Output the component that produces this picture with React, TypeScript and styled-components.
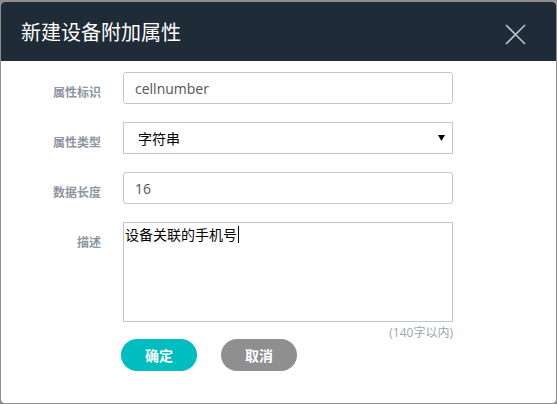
import React from "react";
import styled, { createGlobalStyle } from "styled-components";

const Global = createGlobalStyle`
  html, body { margin: 0; padding: 0; }
  body {
    background: #8e8e8e;
    font-family: "Open Sans", "Noto Sans CJK SC", sans-serif;
    width: 557px;
    height: 404px;
    overflow: hidden;
  }
  * { box-sizing: border-box; }
`;

const Dialog = styled.div`
  margin: 2px 1px 0 1px;
  width: 555px;
  height: 401px;
  background: #ffffff;
  border-radius: 4px;
  overflow: hidden;
  display: flex;
  flex-direction: column;
`;

const Header = styled.div`
  height: 59px;
  background: #1f2b37;
  display: flex;
  align-items: center;
  justify-content: space-between;
  padding: 0 30px 0 20px;
`;

const Title = styled.h1`
  margin: 0;
  font-family: "Noto Sans CJK SC", sans-serif;
  font-weight: 400;
  font-size: 20px;
  line-height: 24px;
  color: #ffffff;
`;

const Close = styled.button`
  border: 0;
  background: none;
  padding: 0;
  width: 21px;
  height: 21px;
  margin-top: 5px;
  display: flex;
  cursor: pointer;
`;

const Form = styled.div`
  display: flex;
  flex-direction: column;
  gap: 18px;
  padding-top: 11px;
`;

const Row = styled.div`
  display: grid;
  grid-template-columns: 100px 330px;
  column-gap: 22px;
  align-items: start;
`;

const Label = styled.label`
  text-align: right;
  font-family: "Noto Sans CJK SC", sans-serif;
  font-size: 12px;
  font-weight: 700;
  line-height: 14px;
  padding-top: 13px;
  color: #8d969f;
`;

const Input = styled.div`
  height: 32px;
  border: 1px solid #c2c6ca;
  border-radius: 3px;
  padding-left: 11px;
  display: flex;
  align-items: center;
  font-size: 14px;
  color: #555555;
`;

const Select = styled.div`
  height: 32px;
  border: 1px solid #c2c6ca;
  padding: 0 7px 0 14px;
  display: flex;
  align-items: center;
  justify-content: space-between;
  font-family: "Noto Sans CJK SC", sans-serif;
  font-size: 14px;
  color: #000000;
`;

const TextArea = styled.div`
  height: 100px;
  border: 1px solid #c2c6ca;
  padding: 2px 1px;
  font-family: "Noto Sans CJK SC", sans-serif;
  font-size: 14px;
  line-height: 18px;
  color: #000000;
  display: flex;
  align-items: flex-start;
`;

const Caret = styled.span`
  display: inline-block;
  width: 1px;
  height: 17px;
  background: #000;
  margin-left: 1px;
  margin-top: 1px;
`;

const Hint = styled.div`
  grid-column: 2;
  text-align: right;
  font-size: 12px;
  line-height: 12px;
  color: #9aa6b2;
  margin-top: 5px;
`;

const Actions = styled.div`
  grid-column: 2;
  display: flex;
  gap: 24px;
  margin-left: -2px;
`;

const Button = styled.button<{ $tone: "primary" | "muted" }>`
  width: 76px;
  height: 32px;
  border: 0;
  border-radius: 16px;
  background: ${(p) => (p.$tone === "primary" ? "#00bdbf" : "#8f8f8f")};
  color: #ffffff;
  font-family: "Noto Sans CJK SC", sans-serif;
  font-weight: 700;
  font-size: 14px;
  cursor: pointer;
`;

const Block = styled.div`
  display: grid;
  grid-template-columns: 100px 330px;
  column-gap: 22px;
`;

export default function App() {
  return (
    <>
      <Global />
      <Dialog>
        <Header>
          <Title>新建设备附加属性</Title>
          <Close aria-label="close">
            <svg width="21" height="21" viewBox="0 0 21 21">
              <path d="M1 1 L20 20 M20 1 L1 20" stroke="#b8c0c8" strokeWidth="1.6" fill="none" />
            </svg>
          </Close>
        </Header>
        <Form>
          <Row>
            <Label>属性标识</Label>
            <Input>cellnumber</Input>
          </Row>
          <Row>
            <Label>属性类型</Label>
            <Select>
              <span>字符串</span>
              <svg width="7" height="6" viewBox="0 0 7 6">
                <polygon points="0,0 7,0 3.5,6" fill="#000" />
              </svg>
            </Select>
          </Row>
          <Row>
            <Label>数据长度</Label>
            <Input>16</Input>
          </Row>
          <Block>
            <Label>描述</Label>
            <TextArea>
              <span>设备关联的手机号</span>
              <Caret />
            </TextArea>
            <Hint>(140字以内)</Hint>
            <Actions>
              <Button $tone="primary">确定</Button>
              <Button $tone="muted">取消</Button>
            </Actions>
          </Block>
        </Form>
      </Dialog>
    </>
  );
}
